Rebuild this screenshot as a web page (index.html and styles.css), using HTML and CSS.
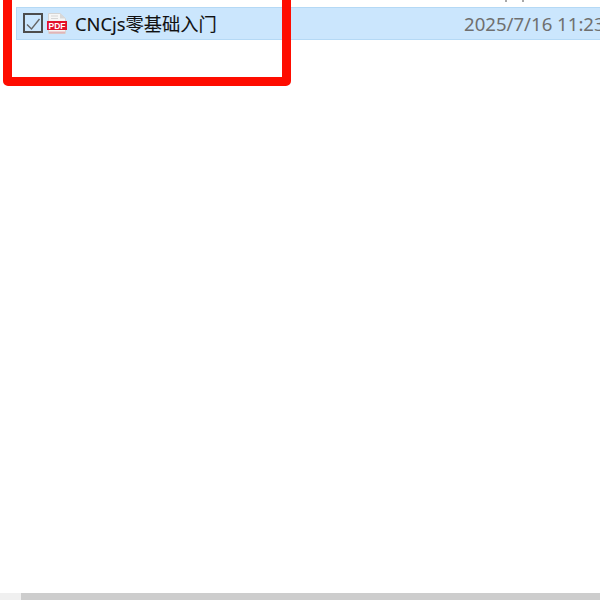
FILE: index.html
```html
<!DOCTYPE html>
<html lang="zh">
<head>
<meta charset="utf-8">
<title>文件列表</title>
<link rel="stylesheet" href="styles.css">
</head>
<body>
<div class="page">
  <div class="clipped-marks"><i class="mark"></i><i class="mark"></i></div>
  <main class="list">
    <div class="row">
      <div class="name-cell">
        <span class="checkbox">
          <svg viewBox="0 0 16 16" width="16" height="16"><path d="M2 9.5 6.5 14 14.5 4" fill="none" stroke="#666" stroke-width="1.4"/></svg>
        </span>
        <svg class="pdf" viewBox="0 0 20 21" width="20" height="21">
          <path d="M1.5 .5H13L18.5 5.5V20.5H1.5Z" fill="#f6f6f6" stroke="#d4d4d4"/>
          <path d="M13 .5V5.5H18.5Z" fill="#d8d8d8"/>
          <path d="M4 3H11M4 5.5H11" stroke="#d6d6d6"/>
          <rect x="0" y="8" width="20" height="9" fill="#e3102b"/>
          <text x="10" y="15.6" class="pdf-label">PDF</text>
          <rect x="2" y="18.5" width="16" height="2" fill="#e2b4b8"/>
        </svg>
        <span class="name">CNCjs零基础入门</span>
      </div>
      <span class="date">2025/7/16 11:23</span>
    </div>
  </main>
  <div class="scrollbar"><div class="track"></div><div class="thumb"></div></div>
</div>
<div class="highlight"></div>
</body>
</html>
```
FILE: styles.css
```css
html, body { margin: 0; padding: 0; background: #fff; }
.page {
  width: 600px;
  height: 600px;
  display: flex;
  flex-direction: column;
  overflow: hidden;
  font-family: "Noto Sans", "Noto Sans CJK SC", sans-serif;
}
.clipped-marks { height: 2px; flex: none; display: flex; gap: 15px; padding-left: 505px; }
.mark { width: 2px; height: 2px; background: #a8a8a8; }
.list { flex: 1; padding: 5px 0 0 16px; }
.row {
  height: 33px;
  box-sizing: border-box;
  display: flex;
  align-items: center;
  padding-bottom: 1px;
  background: #cbe6fd;
  border: 1px solid #b5d9f5;
  border-right: 0;
  overflow: hidden;
  white-space: nowrap;
}
.name-cell { width: 447px; flex: none; display: flex; align-items: center; padding-left: 5.5px; box-sizing: border-box; }
.checkbox {
  width: 20px;
  height: 20px;
  box-sizing: border-box;
  border: 2px solid #4d4d4d;
  display: flex;
  align-items: center;
  justify-content: center;
  flex: none;
}
.checkbox svg { flex: none; }
.pdf { margin-left: 4.5px; flex: none; }
.pdf-label { font: bold 8.5px "Liberation Sans", sans-serif; fill: #fff; text-anchor: middle; }
.name { margin-left: 8px; font-size: 18.3px; color: #111; -webkit-text-stroke: 0.1px #111; }
.date { font-size: 18.6px; color: #6f6f6f; }
.scrollbar { height: 7px; display: flex; flex: none; }
.track { width: 21px; background: #f0f0f0; }
.thumb { flex: 1; background: #cdcdcd; }
.highlight {
  position: absolute;
  left: 3px;
  top: -9px;
  width: 288px;
  height: 95px;
  box-sizing: border-box;
  border: 9px solid #fe0c00;
  border-radius: 5px;
}
```
